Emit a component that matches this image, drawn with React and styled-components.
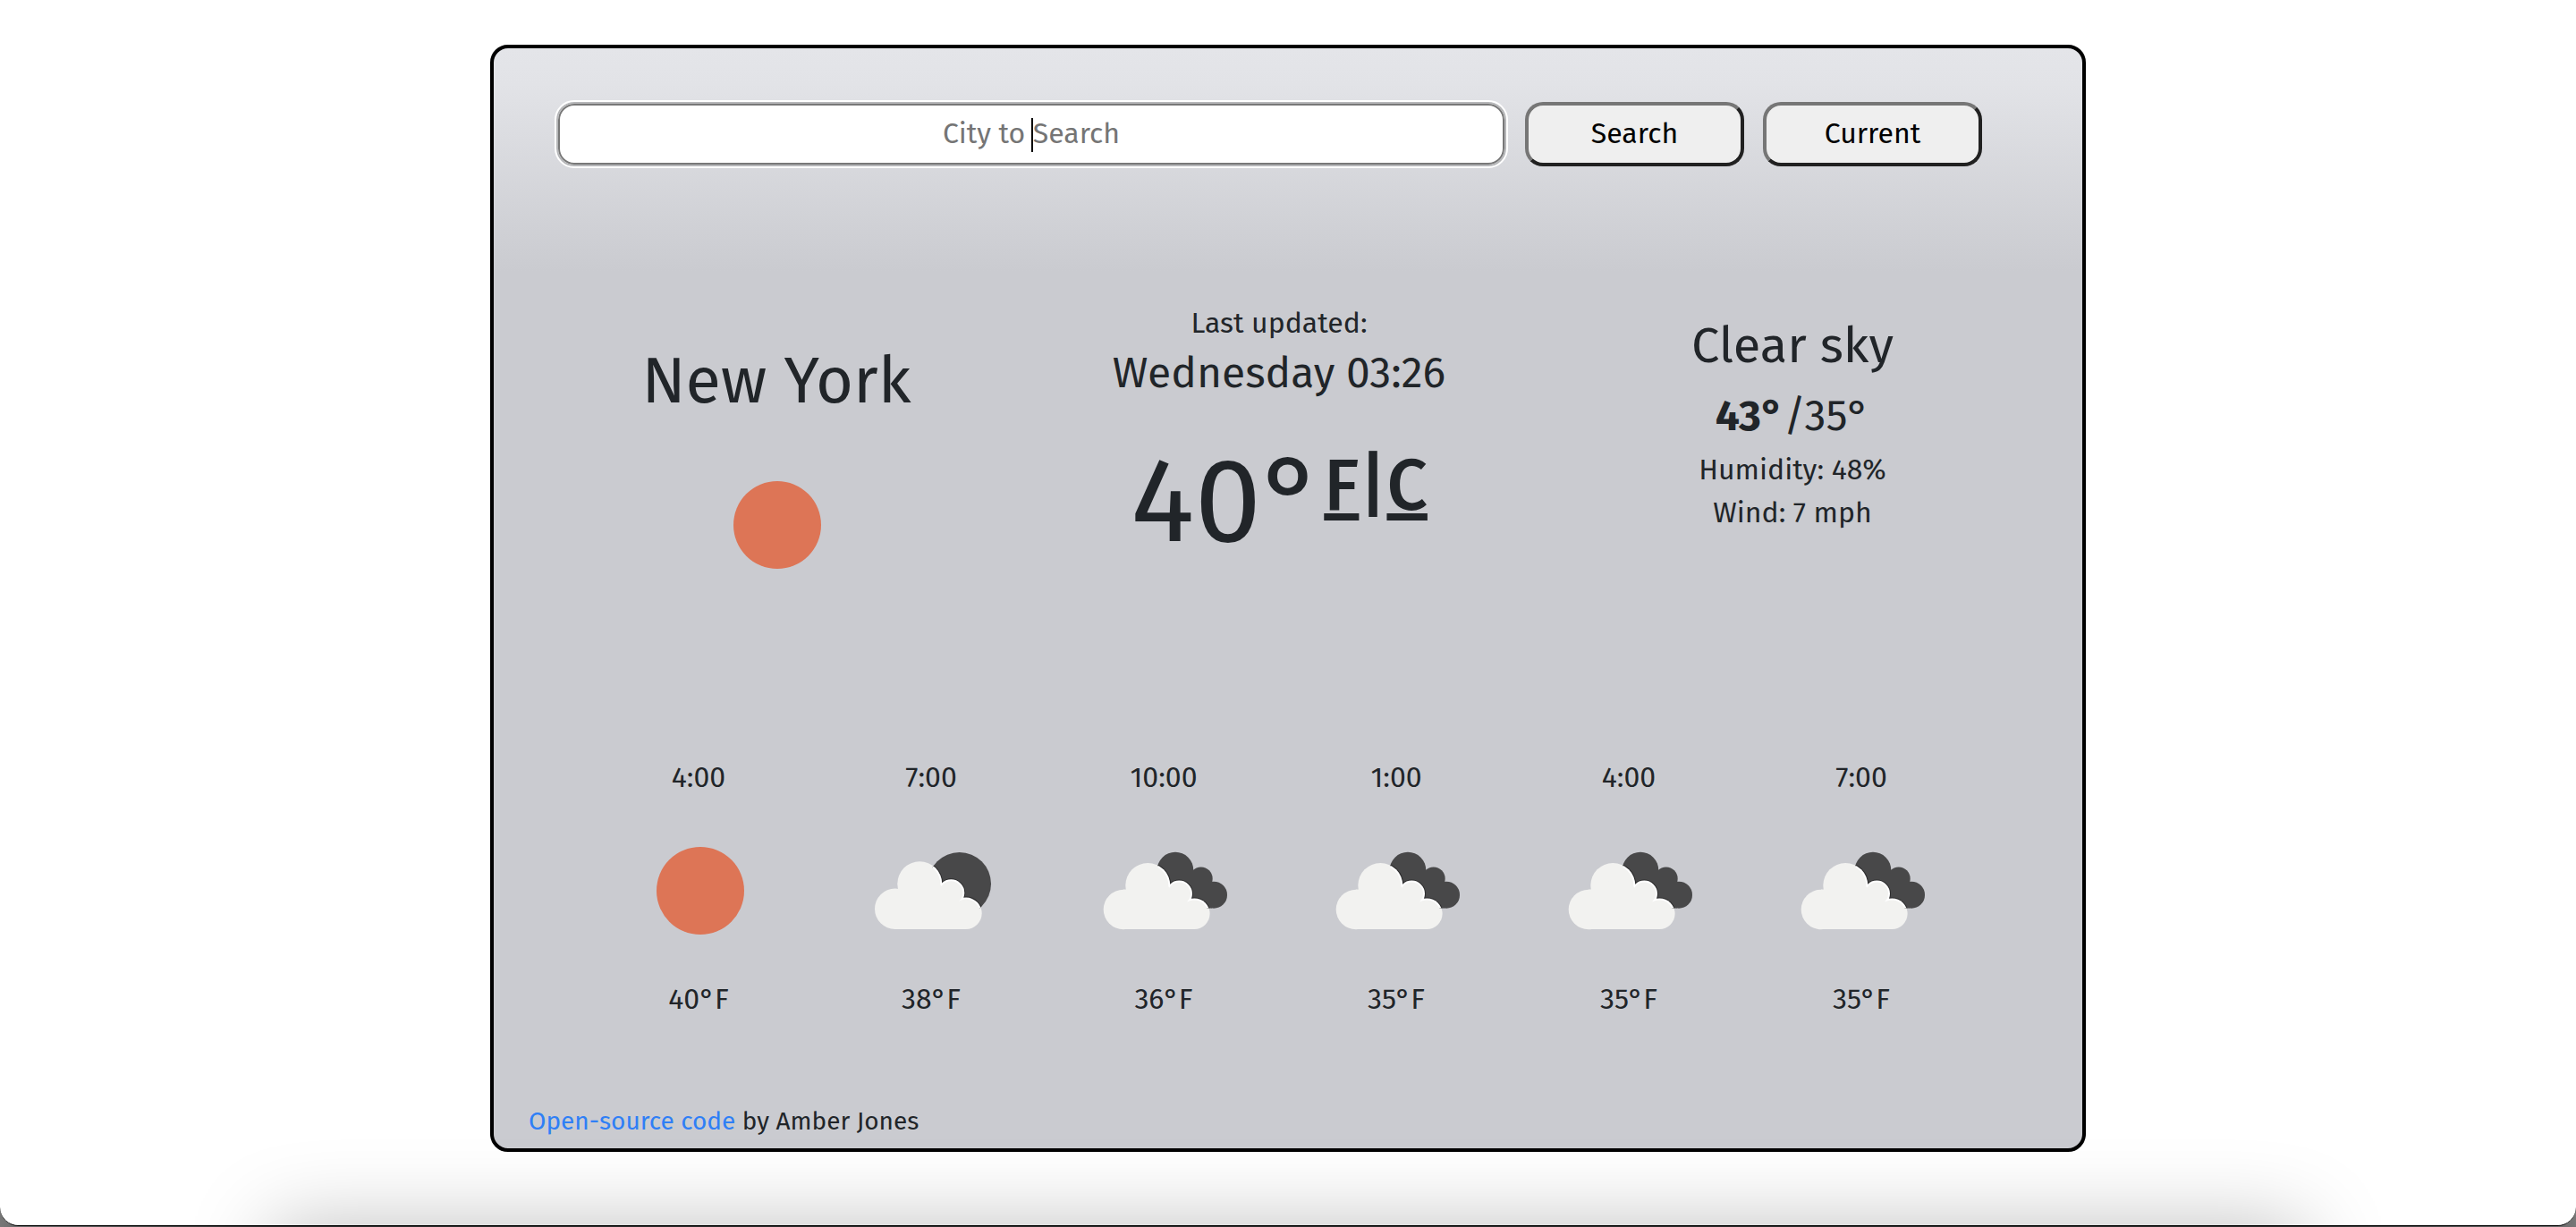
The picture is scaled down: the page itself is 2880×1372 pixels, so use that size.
import React from "react";
import styled, { createGlobalStyle } from "styled-components";

const GlobalStyle = createGlobalStyle`
  *, *::before, *::after { box-sizing: border-box; }
  body {
    margin: 0;
    color: #212529;
    font-family: "Fira Sans", "Noto Sans", "Open Sans", sans-serif;
    font-size: 32px;
    line-height: 48px;
  }
`;

const Desktop = styled.div`
  min-height: 100vh;
  padding-bottom: 1px;
  display: flex;
  background: linear-gradient(90deg, #777 0, #6a6a6a 20px, #2b2b2b 300px, #2b2b2b calc(100% - 300px), #6a6a6a calc(100% - 20px), #777 100%);
`;

const Window = styled.main`
  position: relative;
  flex: 1;
  padding: 50px 48px;
  overflow: hidden;
  background: #fff;
  border-bottom: 1px solid #000;
  border-radius: 0 0 21px 21px;

  &::after {
    content: "";
    position: absolute;
    top: 100%;
    left: 304px;
    right: 304px;
    height: 120px;
    box-shadow: 0 0 92px rgba(0, 0, 0, 0.25);
  }
`;

const Card = styled.section`
  max-width: 1784px;
  margin: 0 auto;
  padding: 60px 0 10px;
  border: 4px solid #000;
  border-radius: 20px;
  background: linear-gradient(#e4e5e9 0, #e2e3e7 40px, #cacbd0 250px);
`;

const SearchForm = styled.form`
  display: flex;
  gap: 21px;
  padding: 0 112px 0 70px;
`;

const SearchBox = styled.div`
  position: relative;
  flex: 1;
  display: flex;
`;

const SearchInput = styled.input`
  width: 100%;
  height: 72px;
  padding: 0 16px 2px;
  border: 2px solid #b6b7b9;
  border-radius: 20px;
  outline: 2px solid #fff;
  background: #fff;
  box-shadow: inset 0 0 0 2px #787878;
  color: #212529;
  caret-color: transparent;
  font-family: inherit;
  font-size: 32px;
  text-align: center;

  &::placeholder { color: #757575; opacity: 1; }
`;

const Caret = styled.span`
  position: absolute;
  top: 18px;
  left: 50%;
  width: 2px;
  height: 38px;
  background: #000;
  pointer-events: none;
`;

const Button = styled.button`
  width: 245px;
  height: 72px;
  padding: 0 0 2px;
  border: 4px solid;
  border-color: #767676 #212121 #212121 #767676;
  border-radius: 20px;
  background: #efefef;
  color: #000;
  font-family: inherit;
  font-size: 32px;
`;

const Overview = styled.div`
  display: grid;
  grid-template-columns: 560fr 564fr 584fr;
  margin-top: 151px;
  padding: 0 32px 0 36px;
  text-align: center;
`;

const Column = styled.div`
  display: flex;
  flex-direction: column;
  align-items: center;
  padding-top: ${(p) => p.$top || 0}px;
`;

const City = styled.h1`
  margin: 0 0 38px;
  font-size: 72px;
  font-weight: 400;
  line-height: 96px;
`;

const Updated = styled.time`
  font-size: 48px;
  line-height: 64px;
`;

const Temperature = styled.div`
  display: flex;
  align-items: flex-start;
  margin-top: 32px;
  font-size: 134px;
  line-height: 160px;
`;

const Units = styled.div`
  display: flex;
  margin-top: 12px;
  font-size: 80px;
  font-weight: 500;
  line-height: 100px;
`;

const UnitLink = styled.a`
  color: inherit;
  text-decoration: underline;
  text-decoration-thickness: 8px;
  text-underline-offset: 4px;
  text-decoration-skip-ink: none;
`;

const Condition = styled.h2`
  margin: 0 0 6px;
  font-size: 56px;
  font-weight: 400;
  line-height: 72px;
`;

const Range = styled.div`
  display: flex;
  font-size: 48px;
  line-height: 72px;
`;

const Hourly = styled.div`
  display: grid;
  grid-template-columns: repeat(6, 1fr);
  margin-top: 183px;
  padding: 0 117px 0 99px;
`;

const Hour = styled.div`
  display: flex;
  flex-direction: column;
  align-items: center;
`;

const Icon = styled.svg`
  width: 150px;
  height: 150px;
`;

const HourIcon = styled(Icon)`
  margin: 28px 0 22px;
`;

const Footer = styled.footer`
  margin-top: 93px;
  padding-left: 39px;
  font-size: 28px;
  line-height: 40px;
`;

const SourceLink = styled.a`
  color: #2f7ff6;
  text-decoration: none;
`;

const clouds = {
  broken: {
    dark: [[106.7, 67.3, 35.3]],
    darkFill: "",
    light: [[34.7, 95.3, 22.7], [62.3, 67.3, 25], [97.3, 77.3, 15], [114, 100.3, 17.7]],
    lightFill: "M34.7 73H42L62 60 85 68 98 84 114 90V118H34.7Z",
  },
  scattered: {
    dark: [[88, 52, 20.3], [116.7, 61.5, 13], [131, 79.7, 15]],
    darkFill: "M80 52H108.5L117 60 129 66V94.6H110L80 80Z",
    light: [[30, 96, 22.3], [57.3, 69, 25], [92.3, 78.3, 14.7], [109.3, 100.7, 17.3]],
    lightFill: "M30 73.7H38L57 62 80 70 94 85 109 90V118H30Z",
  },
};

function Circles({ items, inset = 0, ...rest }) {
  return items.map(([cx, cy, r]) => (
    <circle key={`${cx}-${cy}`} cx={cx} cy={cy} r={r - inset} {...rest} />
  ));
}

function CloudShape({ kind, id }) {
  const c = clouds[kind];
  return (
    <>
      <clipPath id={id}>
        <Circles items={c.dark} />
        {c.darkFill && <path d={c.darkFill} />}
      </clipPath>
      <g fill="#484849">
        <Circles items={c.dark} />
        {c.darkFill && <path d={c.darkFill} />}
      </g>
      <g fill="#f2f2f0">
        <Circles items={c.light} />
        <path d={c.lightFill} />
      </g>
      <g clipPath={`url(#${id})`}>
        <Circles items={c.light} fill="#2c2c2d" stroke="#2c2c2d" strokeWidth="2" />
        <Circles items={c.light} fill="#fff" />
      </g>
      <g fill="#f2f2f0">
        <Circles items={c.light} inset={2} />
        <path d={c.lightFill} />
      </g>
    </>
  );
}

function WeatherIcon({ kind, id, as: Tag = HourIcon, label }) {
  return (
    <Tag viewBox="0 0 150 150" role="img" aria-label={label}>
      {kind === "clear" ? (
        <circle cx={Tag === Icon ? 76 : 77} cy="75" r="49" fill="#dd7556" />
      ) : (
        <CloudShape kind={kind} id={id} />
      )}
    </Tag>
  );
}

const forecast = [
  { time: "4:00", kind: "clear", temp: 40 },
  { time: "7:00", kind: "broken", temp: 38 },
  { time: "10:00", kind: "scattered", temp: 36 },
  { time: "1:00", kind: "scattered", temp: 35 },
  { time: "4:00", kind: "scattered", temp: 35 },
  { time: "7:00", kind: "scattered", temp: 35 },
];

export default function App() {
  return (
    <Desktop>
      <GlobalStyle />
      <Window>
        <Card>
          <SearchForm onSubmit={(e) => e.preventDefault()}>
            <SearchBox>
              <SearchInput type="text" placeholder="City to Search" aria-label="City to Search" autoComplete="off" />
              <Caret />
            </SearchBox>
            <Button type="submit">Search</Button>
            <Button type="button">Current</Button>
          </SearchForm>

          <Overview>
            <Column $top={41}>
              <City>New York</City>
              <WeatherIcon as={Icon} kind="clear" label="Clear" />
            </Column>
            <Column>
              <span>Last updated:</span>
              <Updated>Wednesday 03:26</Updated>
              <Temperature>
                <span>40°</span>
                <Units>
                  <UnitLink href="#f">F</UnitLink>
                  <span>|</span>
                  <UnitLink href="#c">C</UnitLink>
                </Units>
              </Temperature>
            </Column>
            <Column $top={14}>
              <Condition>Clear sky</Condition>
              <Range>
                <strong>43°</strong>
                <span>/35°</span>
              </Range>
              <span>Humidity: 48%</span>
              <span>Wind: 7 mph</span>
            </Column>
          </Overview>

          <Hourly>
            {forecast.map((h, i) => (
              <Hour key={i}>
                <span>{h.time}</span>
                <WeatherIcon kind={h.kind} id={`cloud-${i}`} label={h.kind} />
                <span>{h.temp}°F</span>
              </Hour>
            ))}
          </Hourly>

          <Footer>
            <SourceLink href="#source">Open-source code</SourceLink> by Amber Jones
          </Footer>
        </Card>
      </Window>
    </Desktop>
  );
}
